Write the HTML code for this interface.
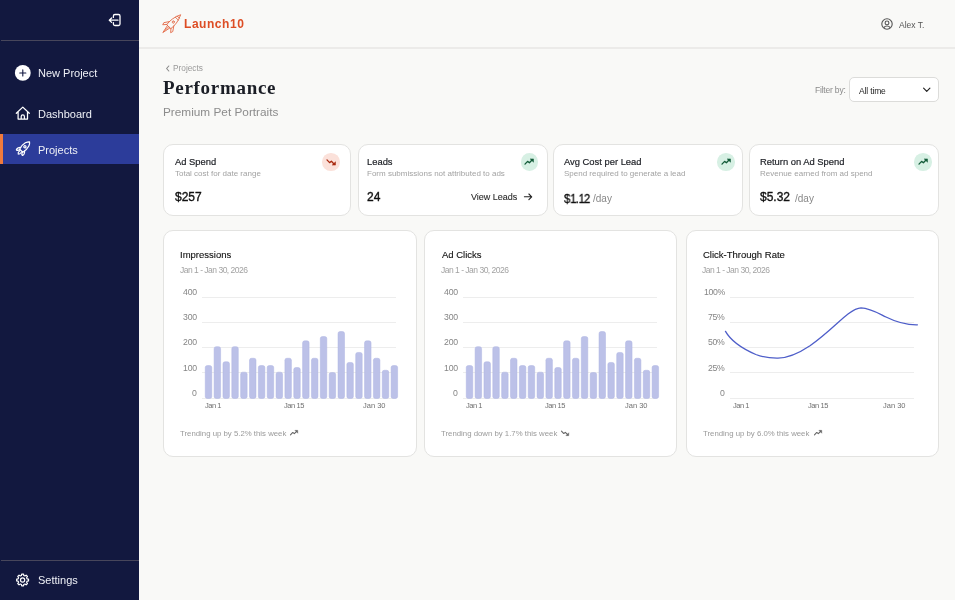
<!DOCTYPE html><html><head><meta charset="utf-8"><style>
html,body{margin:0;padding:0;width:955px;height:600px;overflow:hidden;background:#f9f9f7;font-family:"Liberation Sans",sans-serif;}
.t{position:absolute;white-space:nowrap;line-height:1;will-change:transform;}
.abs{position:absolute;}
.card{position:absolute;background:#fff;border:1px solid #e3e3e1;box-sizing:border-box;border-radius:10px;}
</style></head><body>
<div class="abs" style="left:0;top:0;width:139px;height:600px;background:#12183f"></div>
<div class="abs" style="left:1px;top:40px;width:138px;height:1px;background:#47465b"></div>
<div class="abs" style="left:1px;top:560px;width:138px;height:1px;background:#47465b"></div>
<div class="abs" style="left:0;top:134px;width:139px;height:30px;background:#2c3c9a"></div>
<div class="abs" style="left:0;top:134px;width:3px;height:30px;background:#f07a3c"></div>
<svg class="abs" style="left:107px;top:12px" width="16" height="16" viewBox="0 0 16 16" fill="none" stroke="#fff" stroke-width="1.3" stroke-linecap="round" stroke-linejoin="round">
<path d="M6.4 5.4V4a1.5 1.5 0 0 1 1.5-1.5h3.6a1.5 1.5 0 0 1 1.5 1.5v8a1.5 1.5 0 0 1-1.5 1.5H7.9a1.5 1.5 0 0 1-1.5-1.5v-1.4"/>
<path d="M11 8.2H2.5M4.6 6 2.3 8.2l2.3 2.2"/></svg>
<svg class="abs" style="left:10px;top:60px" width="26" height="26" viewBox="10 60 26 26">
<circle cx="22.8" cy="72.9" r="7.9" fill="#fff"/><path d="M22.8 69.9v6.1M19.75 72.95h6.1" stroke="#131941" stroke-width="1.1" stroke-linecap="round"/></svg>
<svg class="abs" style="left:10px;top:100px" width="26" height="26" viewBox="10 100 26 26" fill="none" stroke="#fff" stroke-width="1.25" stroke-linejoin="round" stroke-linecap="round">
<path d="M16.3 113.3 22.8 107.1 29.3 113.3M18.1 111.7v7.4h9.4v-7.4M21.2 119.1v-2.6a1.6 1.6 0 0 1 3.2 0v2.6"/></svg>
<svg class="abs" style="left:10px;top:136px" width="26" height="26" viewBox="10 136 26 26" fill="none" stroke="#fff" stroke-width="1.2" stroke-linejoin="round" stroke-linecap="round">
<g transform="translate(25.05 146.65) rotate(-47)">
<path d="M-5.6 -2.2 C-3 -3 1 -3 3 -2.4 C5 -1.6 6.2 -0.6 6.6 0 C6.2 0.6 5 1.6 3 2.4 C1 3 -3 3 -5.6 2.2 Z"/>
<circle cx="-0.2" cy="0" r="1.1"/>
<path d="M-3.6 -2.7 C-5 -4.2 -7.2 -4.6 -8.2 -4.2 C-8.4 -3 -7.5 -2.2 -5.6 -1.8"/>
<path d="M-3.6 2.7 C-5 4.2 -7.2 4.6 -8.2 4.2 C-8.4 3 -7.5 2.2 -5.6 1.8"/>
<path d="M-6.6 -1.1 C-8.3 -1.4 -9.6 -0.8 -10 0 C-9.6 0.8 -8.3 1.4 -6.6 1.1"/>
</g></svg>
<svg class="abs" style="left:10px;top:567px" width="26" height="26" viewBox="10 567 26 26" fill="none" stroke="#fff" stroke-width="1.2" stroke-linejoin="round">
<path d="M28.53 579.06 L28.53 580.94 L27.04 581.21 L26.60 582.28 L27.45 583.53 L26.13 584.85 L24.88 584.00 L23.81 584.44 L23.54 585.93 L21.66 585.93 L21.39 584.44 L20.32 584.00 L19.07 584.85 L17.75 583.53 L18.60 582.28 L18.16 581.21 L16.67 580.94 L16.67 579.06 L18.16 578.79 L18.60 577.72 L17.75 576.47 L19.07 575.15 L20.32 576.00 L21.39 575.56 L21.66 574.07 L23.54 574.07 L23.81 575.56 L24.88 576.00 L26.13 575.15 L27.45 576.47 L26.60 577.72 L27.04 578.79Z"/><circle cx="22.6" cy="580.0" r="2.1"/></svg>
<div class="t" style="left:38.00px;top:68.29px;font-size:11px;color:#eef0f6;font-weight:400;font-family:'Liberation Sans',sans-serif;">New Project</div>
<div class="t" style="left:38.00px;top:108.99px;font-size:11px;color:#eef0f6;font-weight:400;font-family:'Liberation Sans',sans-serif;">Dashboard</div>
<div class="t" style="left:38.30px;top:144.69px;font-size:11px;color:#eef0f6;font-weight:400;font-family:'Liberation Sans',sans-serif;">Projects</div>
<div class="t" style="left:38.30px;top:575.29px;font-size:11px;color:#eef0f6;font-weight:400;font-family:'Liberation Sans',sans-serif;">Settings</div>
<div class="abs" style="left:139px;top:47px;width:816px;height:2px;background:#ecebe9"></div>
<svg class="abs" style="left:158px;top:10px" width="28" height="28" viewBox="158 10 28 28" fill="none" stroke="#e2603a" stroke-width="0.8" stroke-linejoin="round" stroke-linecap="round">
<g transform="translate(172.9 22.5) rotate(-45)">
<path d="M-5.6 -2.9 C-1 -3.6 5 -3 11 0 C5 3 -1 3.6 -5.6 2.9 Z"/>
<path d="M-1.8 -3.1 L-6.5 -6.3 L-8.8 -5.6 L-5.6 -2.9 M-1.8 3.1 L-6.5 6.3 L-8.8 5.6 L-5.6 2.9"/>
<path d="M-6 -1.7 L-14.2 0 L-6 1.7 M-6 0 L-11 0"/>
<circle cx="0.6" cy="0" r="1.1"/>
<path d="M5.5 -2.1 L5.5 2.1 M7.6 -1.4 L7.6 1.4"/>
</g></svg>
<div class="t" style="left:184.30px;top:18.24px;font-size:12px;color:#dd4d24;font-weight:700;font-family:'Liberation Sans',sans-serif;letter-spacing:0.55px;">Launch10</div>
<svg class="abs" style="left:880.5px;top:18px" width="12" height="12" viewBox="0 0 12 12" fill="none" stroke="#555" stroke-width="1.1">
<circle cx="6" cy="6" r="5.2"/><circle cx="6" cy="4.9" r="1.9"/><path d="M2.9 9.6c.7-1.1 1.8-1.6 3.1-1.6s2.4.5 3.1 1.6"/></svg>
<div class="t" style="left:899.30px;top:21.10px;font-size:8.5px;color:#555;font-weight:400;font-family:'Liberation Sans',sans-serif;">Alex T.</div>
<svg class="abs" style="left:165px;top:65px" width="6" height="7" viewBox="0 0 6 7" fill="none" stroke="#888" stroke-width="1.1" stroke-linecap="round" stroke-linejoin="round"><path d="M3.8 1 1.6 3.5 3.8 6"/></svg>
<div class="t" style="left:173.30px;top:64.37px;font-size:8.3px;color:#9a9a9a;font-weight:400;font-family:'Liberation Sans',sans-serif;">Projects</div>
<div class="t" style="left:163.30px;top:78.49px;font-size:19px;color:#1b1e26;font-weight:700;font-family:'Liberation Serif',serif;letter-spacing:0.7px;">Performance</div>
<div class="t" style="left:162.80px;top:107.21px;font-size:11.8px;color:#8c8c8c;font-weight:400;font-family:'Liberation Sans',sans-serif;">Premium Pet Portraits</div>
<div class="t" style="left:814.50px;top:86.20px;font-size:8.5px;color:#8a8a8a;font-weight:400;font-family:'Liberation Sans',sans-serif;letter-spacing:-0.2px;">Filter by:</div>
<div class="abs" style="left:849px;top:77px;width:90px;height:25px;box-sizing:border-box;border:1px solid #dcdcda;border-radius:5px;background:#fff"></div>
<div class="t" style="left:859.30px;top:86.60px;font-size:8.5px;color:#222;font-weight:400;font-family:'Liberation Sans',sans-serif;letter-spacing:-0.15px;">All time</div>
<svg class="abs" style="left:918px;top:82px" width="16" height="16" viewBox="918 82 16 16" fill="none" stroke="#222" stroke-width="1.15" stroke-linecap="round" stroke-linejoin="round"><path d="M923.6 88.1 926.75 91.3 929.9 88.1"/></svg>
<div class="card" style="left:163px;top:144px;width:188px;height:71.5px"></div>
<div class="card" style="left:358px;top:144px;width:190px;height:71.5px"></div>
<div class="card" style="left:553px;top:144px;width:190px;height:71.5px"></div>
<div class="card" style="left:749px;top:144px;width:190px;height:71.5px"></div>
<div class="abs" style="left:322.25px;top:153.35px;width:17.5px;height:17.5px;border-radius:50%;background:#fbe1da"></div>
<svg class="abs" style="left:321.00px;top:152.10px" width="20" height="20" viewBox="0 0 20 20"><polyline points="6.00,7.90 8.60,10.60 10.40,9.30 13.00,11.90" fill="none" stroke="#a8290f" stroke-width="1.35" stroke-linejoin="round" stroke-linecap="round"/><polygon points="11.20,13.10 14.50,13.10 14.50,9.80" fill="#a8290f" stroke="#a8290f" stroke-width="0.5" stroke-linejoin="round"/></svg>
<div class="abs" style="left:520.55px;top:153.45px;width:17.5px;height:17.5px;border-radius:50%;background:#d7f0e4"></div>
<svg class="abs" style="left:519.30px;top:152.20px" width="20" height="20" viewBox="0 0 20 20"><polyline points="6.00,12.10 8.60,9.40 10.40,10.70 13.00,8.10" fill="none" stroke="#145c3a" stroke-width="1.35" stroke-linejoin="round" stroke-linecap="round"/><polygon points="11.20,6.90 14.50,6.90 14.50,10.20" fill="#145c3a" stroke="#145c3a" stroke-width="0.5" stroke-linejoin="round"/></svg>
<div class="abs" style="left:717.15px;top:153.35px;width:17.5px;height:17.5px;border-radius:50%;background:#d7f0e4"></div>
<svg class="abs" style="left:715.90px;top:152.10px" width="20" height="20" viewBox="0 0 20 20"><polyline points="6.00,12.10 8.60,9.40 10.40,10.70 13.00,8.10" fill="none" stroke="#145c3a" stroke-width="1.35" stroke-linejoin="round" stroke-linecap="round"/><polygon points="11.20,6.90 14.50,6.90 14.50,10.20" fill="#145c3a" stroke="#145c3a" stroke-width="0.5" stroke-linejoin="round"/></svg>
<div class="abs" style="left:914.05px;top:153.35px;width:17.5px;height:17.5px;border-radius:50%;background:#d7f0e4"></div>
<svg class="abs" style="left:912.80px;top:152.10px" width="20" height="20" viewBox="0 0 20 20"><polyline points="6.00,12.10 8.60,9.40 10.40,10.70 13.00,8.10" fill="none" stroke="#145c3a" stroke-width="1.35" stroke-linejoin="round" stroke-linecap="round"/><polygon points="11.20,6.90 14.50,6.90 14.50,10.20" fill="#145c3a" stroke="#145c3a" stroke-width="0.5" stroke-linejoin="round"/></svg>
<div class="t" style="left:175.10px;top:156.94px;font-size:9.4px;color:#1e2026;font-weight:400;font-family:'Liberation Sans',sans-serif;-webkit-text-stroke:0.2px currentColor;">Ad Spend</div>
<div class="t" style="left:175.10px;top:169.53px;font-size:8px;color:#a2a2a2;font-weight:400;font-family:'Liberation Sans',sans-serif;">Total cost for date range</div>
<div class="t" style="left:175.10px;top:191.44px;font-size:12px;color:#111;font-weight:400;font-family:'Liberation Sans',sans-serif;-webkit-text-stroke:0.35px #111;">$257</div>
<div class="t" style="left:367.30px;top:156.94px;font-size:9.4px;color:#1e2026;font-weight:400;font-family:'Liberation Sans',sans-serif;-webkit-text-stroke:0.2px currentColor;">Leads</div>
<div class="t" style="left:367.30px;top:169.53px;font-size:8px;color:#a2a2a2;font-weight:400;font-family:'Liberation Sans',sans-serif;">Form submissions not attributed to ads</div>
<div class="t" style="left:367.30px;top:191.34px;font-size:12px;color:#111;font-weight:400;font-family:'Liberation Sans',sans-serif;-webkit-text-stroke:0.35px #111;">24</div>
<div class="t" style="left:470.80px;top:193.28px;font-size:9px;color:#2a2a2a;font-weight:400;font-family:'Liberation Sans',sans-serif;-webkit-text-stroke:0.1px currentColor;">View Leads</div>
<svg class="abs" style="left:520px;top:190px" width="16" height="14" viewBox="520 190 16 14" fill="none" stroke="#222" stroke-width="1.1" stroke-linecap="round" stroke-linejoin="round"><path d="M524.4 196.8h7.3M528.9 194 531.7 196.8 528.9 199.6"/></svg>
<div class="t" style="left:564.00px;top:156.94px;font-size:9.4px;color:#1e2026;font-weight:400;font-family:'Liberation Sans',sans-serif;-webkit-text-stroke:0.2px currentColor;">Avg Cost per Lead</div>
<div class="t" style="left:564.00px;top:169.53px;font-size:8px;color:#a2a2a2;font-weight:400;font-family:'Liberation Sans',sans-serif;">Spend required to generate a lead</div>
<div class="t" style="left:564.00px;top:192.64px;font-size:12px;color:#111;font-weight:400;font-family:'Liberation Sans',sans-serif;-webkit-text-stroke:0.35px #111;transform:scaleX(0.93);transform-origin:0 0;">$<span style='letter-spacing:-0.9px'>1</span>.<span style='letter-spacing:-0.9px'>1</span>2</div>
<div class="t" style="left:593.20px;top:193.84px;font-size:10px;color:#888;font-weight:400;font-family:'Liberation Sans',sans-serif;">/day</div>
<div class="t" style="left:760.30px;top:156.94px;font-size:9.4px;color:#1e2026;font-weight:400;font-family:'Liberation Sans',sans-serif;-webkit-text-stroke:0.2px currentColor;">Return on Ad Spend</div>
<div class="t" style="left:760.30px;top:169.53px;font-size:8px;color:#a2a2a2;font-weight:400;font-family:'Liberation Sans',sans-serif;">Revenue earned from ad spend</div>
<div class="t" style="left:760.30px;top:191.44px;font-size:12px;color:#111;font-weight:400;font-family:'Liberation Sans',sans-serif;-webkit-text-stroke:0.35px #111;">$5.32</div>
<div class="t" style="left:795.40px;top:193.84px;font-size:10px;color:#888;font-weight:400;font-family:'Liberation Sans',sans-serif;">/day</div>
<div class="card" style="left:163px;top:230px;width:253.50px;height:226.5px"></div>
<div class="card" style="left:424.3px;top:230px;width:253.20px;height:226.5px"></div>
<div class="card" style="left:685.5px;top:230px;width:253.50px;height:226.5px"></div>
<div class="t" style="left:180.20px;top:249.96px;font-size:9.5px;color:#111;font-weight:400;font-family:'Liberation Sans',sans-serif;-webkit-text-stroke:0.12px currentColor;">Impressions</div>
<div class="t" style="left:180.00px;top:265.80px;font-size:8.5px;color:#a2a2a2;font-weight:400;font-family:'Liberation Sans',sans-serif;letter-spacing:-0.5px;">Jan 1 - Jan 30, 2026</div>
<div class="t" style="right:758.40px;top:287.64px;font-size:8.7px;color:#858585;text-align:right;letter-spacing:-0.15px;">400</div>
<div class="abs" style="left:202px;top:296.50px;width:194px;height:1px;background:#ededed"></div>
<div class="t" style="right:758.40px;top:312.94px;font-size:8.7px;color:#858585;text-align:right;letter-spacing:-0.15px;">300</div>
<div class="abs" style="left:202px;top:321.80px;width:194px;height:1px;background:#ededed"></div>
<div class="t" style="right:758.40px;top:338.24px;font-size:8.7px;color:#858585;text-align:right;letter-spacing:-0.15px;">200</div>
<div class="abs" style="left:202px;top:347.10px;width:194px;height:1px;background:#ededed"></div>
<div class="t" style="right:758.40px;top:363.54px;font-size:8.7px;color:#858585;text-align:right;letter-spacing:-0.15px;">100</div>
<div class="abs" style="left:202px;top:372.40px;width:194px;height:1px;background:#ededed"></div>
<div class="t" style="right:758.40px;top:389.34px;font-size:8.7px;color:#858585;text-align:right;letter-spacing:-0.15px;">0</div>
<div class="abs" style="left:202px;top:397.70px;width:194px;height:1px;background:#ededed"></div>
<div class="abs" style="left:200px;top:290px;width:202px;height:112px;overflow:hidden"><svg class="abs" style="left:0;top:0" width="202" height="112" viewBox="0 0 202 112"><rect x="5.25" y="75.55" width="6.5" height="32.90" rx="2" fill="#bcc1e8" stroke="#aeb4e2" stroke-width="0.5"/><rect x="14.10" y="56.65" width="6.5" height="51.80" rx="2" fill="#bcc1e8" stroke="#aeb4e2" stroke-width="0.5"/><rect x="22.95" y="71.75" width="6.5" height="36.70" rx="2" fill="#bcc1e8" stroke="#aeb4e2" stroke-width="0.5"/><rect x="31.80" y="56.65" width="6.5" height="51.80" rx="2" fill="#bcc1e8" stroke="#aeb4e2" stroke-width="0.5"/><rect x="40.65" y="82.15" width="6.5" height="26.30" rx="2" fill="#bcc1e8" stroke="#aeb4e2" stroke-width="0.5"/><rect x="49.50" y="68.25" width="6.5" height="40.20" rx="2" fill="#bcc1e8" stroke="#aeb4e2" stroke-width="0.5"/><rect x="58.35" y="75.55" width="6.5" height="32.90" rx="2" fill="#bcc1e8" stroke="#aeb4e2" stroke-width="0.5"/><rect x="67.20" y="75.55" width="6.5" height="32.90" rx="2" fill="#bcc1e8" stroke="#aeb4e2" stroke-width="0.5"/><rect x="76.05" y="82.15" width="6.5" height="26.30" rx="2" fill="#bcc1e8" stroke="#aeb4e2" stroke-width="0.5"/><rect x="84.90" y="68.25" width="6.5" height="40.20" rx="2" fill="#bcc1e8" stroke="#aeb4e2" stroke-width="0.5"/><rect x="93.75" y="77.55" width="6.5" height="30.90" rx="2" fill="#bcc1e8" stroke="#aeb4e2" stroke-width="0.5"/><rect x="102.60" y="50.85" width="6.5" height="57.60" rx="2" fill="#bcc1e8" stroke="#aeb4e2" stroke-width="0.5"/><rect x="111.45" y="68.25" width="6.5" height="40.20" rx="2" fill="#bcc1e8" stroke="#aeb4e2" stroke-width="0.5"/><rect x="120.30" y="46.55" width="6.5" height="61.90" rx="2" fill="#bcc1e8" stroke="#aeb4e2" stroke-width="0.5"/><rect x="129.15" y="82.55" width="6.5" height="25.90" rx="2" fill="#bcc1e8" stroke="#aeb4e2" stroke-width="0.5"/><rect x="138.00" y="41.55" width="6.5" height="66.90" rx="2" fill="#bcc1e8" stroke="#aeb4e2" stroke-width="0.5"/><rect x="146.85" y="72.45" width="6.5" height="36.00" rx="2" fill="#bcc1e8" stroke="#aeb4e2" stroke-width="0.5"/><rect x="155.70" y="62.45" width="6.5" height="46.00" rx="2" fill="#bcc1e8" stroke="#aeb4e2" stroke-width="0.5"/><rect x="164.55" y="50.85" width="6.5" height="57.60" rx="2" fill="#bcc1e8" stroke="#aeb4e2" stroke-width="0.5"/><rect x="173.40" y="68.25" width="6.5" height="40.20" rx="2" fill="#bcc1e8" stroke="#aeb4e2" stroke-width="0.5"/><rect x="182.25" y="80.25" width="6.5" height="28.20" rx="2" fill="#bcc1e8" stroke="#aeb4e2" stroke-width="0.5"/><rect x="191.10" y="75.55" width="6.5" height="32.90" rx="2" fill="#bcc1e8" stroke="#aeb4e2" stroke-width="0.5"/></svg></div>
<div class="t" style="left:205.00px;top:402.25px;font-size:7.5px;color:#707070;font-weight:400;font-family:'Liberation Sans',sans-serif;letter-spacing:-0.5px;">Jan 1</div>
<div class="t" style="left:284.00px;top:402.25px;font-size:7.5px;color:#707070;font-weight:400;font-family:'Liberation Sans',sans-serif;letter-spacing:-0.4px;">Jan 15</div>
<div class="t" style="left:363.20px;top:402.25px;font-size:7.5px;color:#707070;font-weight:400;font-family:'Liberation Sans',sans-serif;">Jan 30</div>
<div class="t" style="left:180.00px;top:429.50px;font-size:7.8px;color:#9a9a9a;font-weight:400;font-family:'Liberation Sans',sans-serif;">Trending up by 5.2% this week</div>
<div class="t" style="left:441.50px;top:249.96px;font-size:9.5px;color:#111;font-weight:400;font-family:'Liberation Sans',sans-serif;-webkit-text-stroke:0.12px currentColor;">Ad Clicks</div>
<div class="t" style="left:441.30px;top:265.80px;font-size:8.5px;color:#a2a2a2;font-weight:400;font-family:'Liberation Sans',sans-serif;letter-spacing:-0.5px;">Jan 1 - Jan 30, 2026</div>
<div class="t" style="right:497.10px;top:287.64px;font-size:8.7px;color:#858585;text-align:right;letter-spacing:-0.15px;">400</div>
<div class="abs" style="left:463.3px;top:296.50px;width:194px;height:1px;background:#ededed"></div>
<div class="t" style="right:497.10px;top:312.94px;font-size:8.7px;color:#858585;text-align:right;letter-spacing:-0.15px;">300</div>
<div class="abs" style="left:463.3px;top:321.80px;width:194px;height:1px;background:#ededed"></div>
<div class="t" style="right:497.10px;top:338.24px;font-size:8.7px;color:#858585;text-align:right;letter-spacing:-0.15px;">200</div>
<div class="abs" style="left:463.3px;top:347.10px;width:194px;height:1px;background:#ededed"></div>
<div class="t" style="right:497.10px;top:363.54px;font-size:8.7px;color:#858585;text-align:right;letter-spacing:-0.15px;">100</div>
<div class="abs" style="left:463.3px;top:372.40px;width:194px;height:1px;background:#ededed"></div>
<div class="t" style="right:497.10px;top:389.34px;font-size:8.7px;color:#858585;text-align:right;letter-spacing:-0.15px;">0</div>
<div class="abs" style="left:463.3px;top:397.70px;width:194px;height:1px;background:#ededed"></div>
<div class="abs" style="left:461.3px;top:290px;width:202px;height:112px;overflow:hidden"><svg class="abs" style="left:0;top:0" width="202" height="112" viewBox="0 0 202 112"><rect x="5.25" y="75.55" width="6.5" height="32.90" rx="2" fill="#bcc1e8" stroke="#aeb4e2" stroke-width="0.5"/><rect x="14.10" y="56.65" width="6.5" height="51.80" rx="2" fill="#bcc1e8" stroke="#aeb4e2" stroke-width="0.5"/><rect x="22.95" y="71.75" width="6.5" height="36.70" rx="2" fill="#bcc1e8" stroke="#aeb4e2" stroke-width="0.5"/><rect x="31.80" y="56.65" width="6.5" height="51.80" rx="2" fill="#bcc1e8" stroke="#aeb4e2" stroke-width="0.5"/><rect x="40.65" y="82.15" width="6.5" height="26.30" rx="2" fill="#bcc1e8" stroke="#aeb4e2" stroke-width="0.5"/><rect x="49.50" y="68.25" width="6.5" height="40.20" rx="2" fill="#bcc1e8" stroke="#aeb4e2" stroke-width="0.5"/><rect x="58.35" y="75.55" width="6.5" height="32.90" rx="2" fill="#bcc1e8" stroke="#aeb4e2" stroke-width="0.5"/><rect x="67.20" y="75.55" width="6.5" height="32.90" rx="2" fill="#bcc1e8" stroke="#aeb4e2" stroke-width="0.5"/><rect x="76.05" y="82.15" width="6.5" height="26.30" rx="2" fill="#bcc1e8" stroke="#aeb4e2" stroke-width="0.5"/><rect x="84.90" y="68.25" width="6.5" height="40.20" rx="2" fill="#bcc1e8" stroke="#aeb4e2" stroke-width="0.5"/><rect x="93.75" y="77.55" width="6.5" height="30.90" rx="2" fill="#bcc1e8" stroke="#aeb4e2" stroke-width="0.5"/><rect x="102.60" y="50.85" width="6.5" height="57.60" rx="2" fill="#bcc1e8" stroke="#aeb4e2" stroke-width="0.5"/><rect x="111.45" y="68.25" width="6.5" height="40.20" rx="2" fill="#bcc1e8" stroke="#aeb4e2" stroke-width="0.5"/><rect x="120.30" y="46.55" width="6.5" height="61.90" rx="2" fill="#bcc1e8" stroke="#aeb4e2" stroke-width="0.5"/><rect x="129.15" y="82.55" width="6.5" height="25.90" rx="2" fill="#bcc1e8" stroke="#aeb4e2" stroke-width="0.5"/><rect x="138.00" y="41.55" width="6.5" height="66.90" rx="2" fill="#bcc1e8" stroke="#aeb4e2" stroke-width="0.5"/><rect x="146.85" y="72.45" width="6.5" height="36.00" rx="2" fill="#bcc1e8" stroke="#aeb4e2" stroke-width="0.5"/><rect x="155.70" y="62.45" width="6.5" height="46.00" rx="2" fill="#bcc1e8" stroke="#aeb4e2" stroke-width="0.5"/><rect x="164.55" y="50.85" width="6.5" height="57.60" rx="2" fill="#bcc1e8" stroke="#aeb4e2" stroke-width="0.5"/><rect x="173.40" y="68.25" width="6.5" height="40.20" rx="2" fill="#bcc1e8" stroke="#aeb4e2" stroke-width="0.5"/><rect x="182.25" y="80.25" width="6.5" height="28.20" rx="2" fill="#bcc1e8" stroke="#aeb4e2" stroke-width="0.5"/><rect x="191.10" y="75.55" width="6.5" height="32.90" rx="2" fill="#bcc1e8" stroke="#aeb4e2" stroke-width="0.5"/></svg></div>
<div class="t" style="left:466.30px;top:402.25px;font-size:7.5px;color:#707070;font-weight:400;font-family:'Liberation Sans',sans-serif;letter-spacing:-0.5px;">Jan 1</div>
<div class="t" style="left:545.30px;top:402.25px;font-size:7.5px;color:#707070;font-weight:400;font-family:'Liberation Sans',sans-serif;letter-spacing:-0.4px;">Jan 15</div>
<div class="t" style="left:624.50px;top:402.25px;font-size:7.5px;color:#707070;font-weight:400;font-family:'Liberation Sans',sans-serif;">Jan 30</div>
<div class="t" style="left:441.30px;top:429.50px;font-size:7.8px;color:#9a9a9a;font-weight:400;font-family:'Liberation Sans',sans-serif;">Trending down by 1.7% this week</div>
<svg class="abs" style="left:284.10px;top:423.00px" width="20" height="20" viewBox="0 0 20 20"><polyline points="6.48,11.85 8.77,9.47 10.35,10.62 12.64,8.33" fill="none" stroke="#666" stroke-width="1.1" stroke-linejoin="round" stroke-linecap="round"/><polygon points="10.88,7.36 13.78,7.36 13.78,10.26" fill="#666" stroke="#666" stroke-width="0.4" stroke-linejoin="round"/></svg>
<svg class="abs" style="left:554.50px;top:423.10px" width="20" height="20" viewBox="0 0 20 20"><polyline points="6.48,8.15 8.77,10.53 10.35,9.38 12.64,11.67" fill="none" stroke="#666" stroke-width="1.1" stroke-linejoin="round" stroke-linecap="round"/><polygon points="10.88,12.64 13.78,12.64 13.78,9.74" fill="#666" stroke="#666" stroke-width="0.4" stroke-linejoin="round"/></svg>
<div class="t" style="left:702.50px;top:249.96px;font-size:9.5px;color:#111;font-weight:400;font-family:'Liberation Sans',sans-serif;-webkit-text-stroke:0.12px currentColor;">Click-Through Rate</div>
<div class="t" style="left:702.30px;top:266.00px;font-size:8.5px;color:#a2a2a2;font-weight:400;font-family:'Liberation Sans',sans-serif;letter-spacing:-0.5px;">Jan 1 - Jan 30, 2026</div>
<div class="t" style="right:230.20px;top:287.64px;font-size:8.7px;color:#858585;text-align:right;letter-spacing:-0.3px;">100%</div>
<div class="abs" style="left:730px;top:296.50px;width:184px;height:1px;background:#ededed"></div>
<div class="t" style="right:230.20px;top:312.94px;font-size:8.7px;color:#858585;text-align:right;letter-spacing:-0.3px;">75%</div>
<div class="abs" style="left:730px;top:321.80px;width:184px;height:1px;background:#ededed"></div>
<div class="t" style="right:230.20px;top:338.24px;font-size:8.7px;color:#858585;text-align:right;letter-spacing:-0.3px;">50%</div>
<div class="abs" style="left:730px;top:347.10px;width:184px;height:1px;background:#ededed"></div>
<div class="t" style="right:230.20px;top:363.54px;font-size:8.7px;color:#858585;text-align:right;letter-spacing:-0.3px;">25%</div>
<div class="abs" style="left:730px;top:372.40px;width:184px;height:1px;background:#ededed"></div>
<div class="t" style="right:230.20px;top:389.34px;font-size:8.7px;color:#858585;text-align:right;letter-spacing:-0.3px;">0</div>
<div class="abs" style="left:730px;top:397.70px;width:184px;height:1px;background:#ededed"></div>
<svg class="abs" style="left:0;top:0" width="955" height="600" viewBox="0 0 955 600" fill="none">
<path d="M725.5 331.4 C731 341 743 349 755.8 354.5 C765 358 772 358.3 778 358.2 C790 358 800 352.5 810 345.8 C828 333 840 320 848 314 C854 309.5 857 307.8 861 307.8 C870 308 878 313 886 317 C896 322 906 325 917.4 324.8" stroke="#4e5ec9" stroke-width="1.3" stroke-linecap="round"/>
</svg>
<div class="t" style="left:732.70px;top:402.25px;font-size:7.5px;color:#707070;font-weight:400;font-family:'Liberation Sans',sans-serif;letter-spacing:-0.5px;">Jan 1</div>
<div class="t" style="left:808.10px;top:402.25px;font-size:7.5px;color:#707070;font-weight:400;font-family:'Liberation Sans',sans-serif;letter-spacing:-0.4px;">Jan 15</div>
<div class="t" style="left:883.00px;top:402.25px;font-size:7.5px;color:#707070;font-weight:400;font-family:'Liberation Sans',sans-serif;">Jan 30</div>
<div class="t" style="left:702.50px;top:429.50px;font-size:7.8px;color:#9a9a9a;font-weight:400;font-family:'Liberation Sans',sans-serif;">Trending up by 6.0% this week</div>
<svg class="abs" style="left:807.50px;top:423.00px" width="20" height="20" viewBox="0 0 20 20"><polyline points="6.48,11.85 8.77,9.47 10.35,10.62 12.64,8.33" fill="none" stroke="#666" stroke-width="1.1" stroke-linejoin="round" stroke-linecap="round"/><polygon points="10.88,7.36 13.78,7.36 13.78,10.26" fill="#666" stroke="#666" stroke-width="0.4" stroke-linejoin="round"/></svg>
</body></html>
